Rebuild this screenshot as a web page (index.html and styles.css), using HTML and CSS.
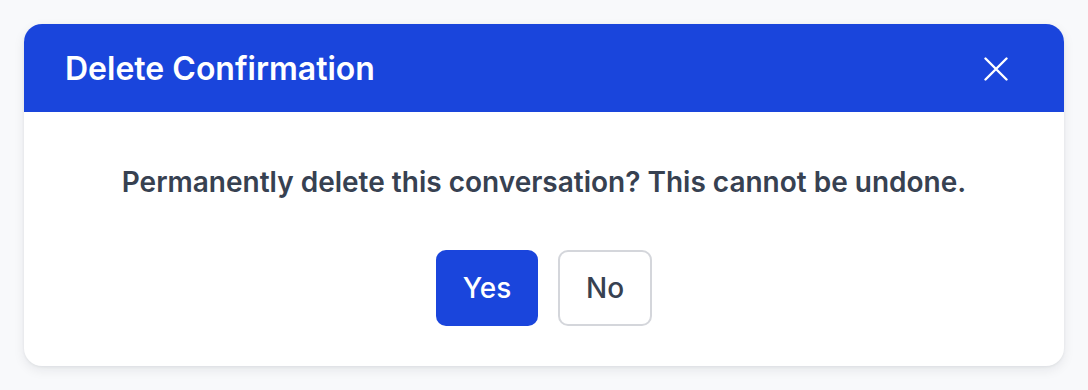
FILE: index.html
```html
<!DOCTYPE html>
<html>
<head>
<meta charset="utf-8">
<link rel="stylesheet" href="styles.css">
</head>
<body>
<div class="page">
  <div class="dialog">
    <div class="dialog-header">
      <h2 class="dialog-title">Delete Confirmation</h2>
      <button class="close-btn" aria-label="Close">
        <svg width="24" height="24" viewBox="0 0 24 24" fill="none" stroke="#ffffff" stroke-width="2.4" stroke-linecap="round"><path d="M1.5 1.5L22.5 22.5M22.5 1.5L1.5 22.5"/></svg>
      </button>
    </div>
    <div class="dialog-body">
      <p class="message">Permanently delete this conversation? This cannot be undone.</p>
      <div class="actions">
        <button class="btn btn-yes">Yes</button>
        <button class="btn btn-no">No</button>
      </div>
    </div>
  </div>
</div>
</body>
</html>
```
FILE: styles.css
```css
* { box-sizing: border-box; }
html, body { margin: 0; padding: 0; }
body {
  background: #f8f9fb;
  font-family: Inter, "Noto Sans", sans-serif;
  width: 1088px;
  height: 390px;
  overflow: hidden;
}
.page { padding: 24px; }
.dialog {
  background: #ffffff;
  border-radius: 18px;
  overflow: hidden;
  box-shadow: 0 4px 12px rgba(15, 23, 42, 0.08), 0 1px 3px rgba(15, 23, 42, 0.06);
}
.dialog-header {
  background: #1a45dc;
  height: 88px;
  display: flex;
  align-items: center;
  justify-content: space-between;
  padding: 2px 56px 0 41px;
}
.dialog-title {
  margin: 0;
  color: #ffffff;
  font-size: 32px;
  line-height: 40px;
  font-weight: 600;
}
.close-btn {
  background: none;
  border: 0;
  padding: 0;
  display: flex;
  cursor: pointer;
}
.dialog-body {
  padding: 50px 40px 40px;
  display: flex;
  flex-direction: column;
  align-items: center;
}
.message {
  margin: 0 0 48px;
  font-size: 28px;
  line-height: 40px;
  font-weight: 600;
  color: #374151;
}
.actions {
  display: flex;
  gap: 20px;
}
.btn {
  height: 76px;
  border-radius: 10px;
  font-family: Inter, "Noto Sans", sans-serif;
  font-size: 28px;
  font-weight: 500;
  padding: 0;
  cursor: pointer;
}
.btn-yes {
  background: #1a45dc;
  color: #ffffff;
  border: 0;
  width: 102px;
}
.btn-no {
  background: #ffffff;
  color: #374151;
  border: 2px solid #d4d6db;
  width: 94px;
}
```
